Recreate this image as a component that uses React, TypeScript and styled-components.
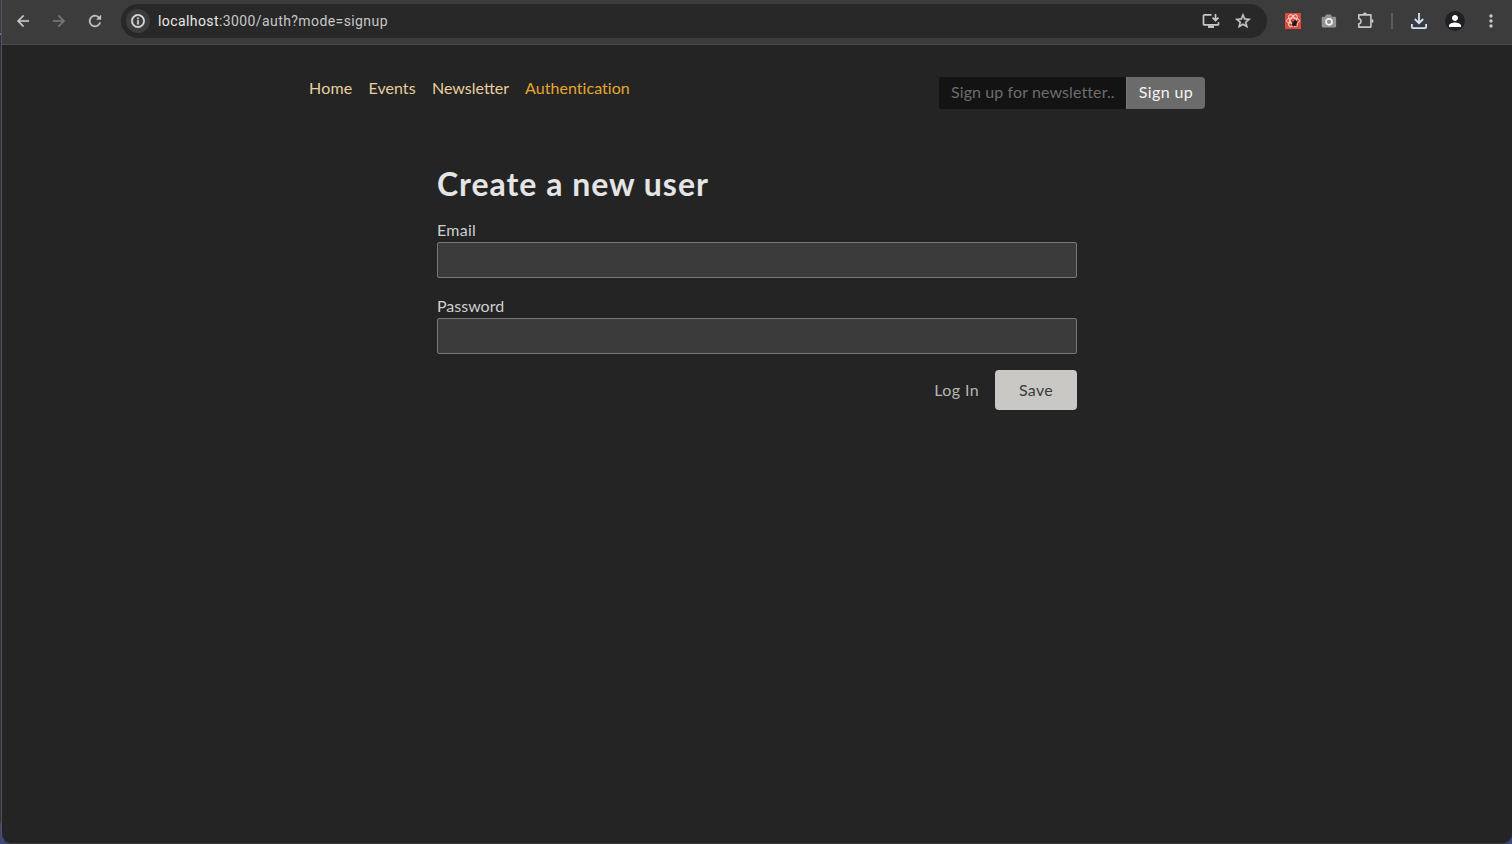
import React from 'react';
import styled, { createGlobalStyle } from 'styled-components';

const GlobalStyle = createGlobalStyle`
  * { box-sizing: border-box; }
  body { margin: 0; background: #30323c; font-family: Lato, sans-serif; }
`;

const Desktop = styled.div`
  height: 844px;
  padding-left: 1px;
  overflow: hidden;
  background: linear-gradient(#3b3d40 0 33px, #4a78c8 33px 35px, #303237 35px 805px, #303237 820px, #3d477c 825px);
`;

const BrowserWindow = styled.div`
  height: 844px;
  border-left: 1px solid #505255;
  border-bottom: 1px solid #38383a;
  border-radius: 0 0 10px 10px;
  overflow: hidden;
  background: #242424;
`;

const Toolbar = styled.div`
  display: flex;
  align-items: center;
  height: 45px;
  padding: 0 3px 3px;
  background: #3c3c3c;
  border-bottom: 1px solid #4a4a4a;
`;

const ToolButton = styled.div<{ $color?: string }>`
  display: flex;
  flex: none;
  align-items: center;
  justify-content: center;
  width: 36px;
  height: 34px;
  color: ${(p) => p.$color ?? '#c7c7c7'};
`;

const AddressBar = styled.div`
  display: flex;
  flex: 1;
  align-items: center;
  height: 34px;
  margin: 0 8px;
  padding: 0 8px 0 5px;
  border-radius: 17px;
  background: #282828;
`;

const SiteInfo = styled.div`
  display: flex;
  align-items: center;
  justify-content: center;
  width: 24px;
  height: 24px;
  margin-right: 8px;
  border-radius: 50%;
  background: #3c3c3c;
  color: #e3e3e3;
`;

const Url = styled.div`
  flex: 1;
  font: 14px/20px Roboto, sans-serif;
  letter-spacing: 0.41px;
  color: #c7c7c7;
`;

const Host = styled.span`
  color: #e8e8e8;
`;

const BarAction = styled.div`
  display: flex;
  justify-content: center;
  width: 32px;
  color: #c7c7c7;
`;

const Separator = styled.div`
  width: 2px;
  height: 16px;
  margin: 0 8px;
  background: #5c5c5c;
`;

const Avatar = styled.div`
  display: flex;
  align-items: center;
  justify-content: center;
  width: 20px;
  height: 20px;
  border-radius: 50%;
  background: #202124;
  color: #fff;
`;

const Header = styled.header`
  display: flex;
  justify-content: space-between;
  width: 896px;
  margin: 32px auto 0;
`;

const Nav = styled.nav`
  display: flex;
  height: 24px;
`;

const NavLink = styled.a<{ $width: number; $spacing: number; $active?: boolean }>`
  width: ${(p) => p.$width}px;
  margin-right: 16px;
  font-size: 16px;
  line-height: 22px;
  letter-spacing: ${(p) => p.$spacing}px;
  white-space: nowrap;
  color: ${(p) => (p.$active ? '#e6a72f' : '#e7cf9f')};
`;

const Newsletter = styled.form`
  display: flex;
  height: 32px;
`;

const NewsletterInput = styled.input`
  width: 187px;
  padding: 0 0 2px 12px;
  border: 0;
  border-radius: 2px 0 0 2px;
  background: #131313;
  font: 16px/30px Lato, sans-serif;
  letter-spacing: 0.1px;

  &::placeholder { color: #6d6d6d; opacity: 1; }
`;

const NewsletterButton = styled.button`
  width: 79px;
  padding: 0 0 2px;
  border: 0;
  border-left: 1px solid #777;
  border-radius: 0 4px 4px 0;
  background: #6b6b6b;
  color: #f4f4f4;
  font: 16px/30px Lato, sans-serif;
  letter-spacing: 0.4px;
`;

const UserForm = styled.form`
  width: 640px;
  margin: 53px auto 0;
`;

const Title = styled.h1`
  margin: 0 0 12px;
  font-size: 32px;
  line-height: 44px;
  font-weight: 700;
  letter-spacing: 0.98px;
  white-space: nowrap;
  color: #e5e5e5;
`;

const Field = styled.div`
  margin-bottom: 16px;
`;

const Label = styled.label<{ $spacing: number }>`
  display: block;
  height: 24px;
  font-size: 16px;
  line-height: 24px;
  letter-spacing: ${(p) => p.$spacing}px;
  color: #cfcfcf;
`;

const Input = styled.input`
  display: block;
  width: 100%;
  height: 36px;
  border: 1px solid #787878;
  border-radius: 2px;
  background: #3b3b3b;
`;

const Actions = styled.div`
  display: flex;
  align-items: center;
  justify-content: flex-end;
  gap: 16px;
`;

const LoginLink = styled.a`
  font-size: 16px;
  line-height: 24px;
  letter-spacing: 0.4px;
  color: #b5b5b3;
`;

const SaveButton = styled.button`
  width: 82px;
  height: 40px;
  padding: 0;
  border: 0;
  border-radius: 4px;
  background: #c9c8c5;
  color: #3a3a3a;
  font: 16px/24px Lato, sans-serif;
  letter-spacing: 0.3px;
`;

const Glyph = ({ d, size = 18, weight = 0 }: { d: string; size?: number; weight?: number }) => (
  <svg width={size} height={size} viewBox="0 0 24 24" fill="currentColor" stroke="currentColor" strokeWidth={weight}><path d={d} /></svg>
);

const InstallIcon = () => (
  <svg width="18" height="18" viewBox="0 0 18 18" fill="none" stroke="currentColor" strokeWidth="1.7">
    <path d="M9.5 2.8H2.4a.9.9 0 0 0-.9.9v8.2a.9.9 0 0 0 .9.9h13.2a.9.9 0 0 0 .9-.9v-1.7M13.5 2v6.2M10.5 5.6l3 3 3-3" />
    <path d="M6 14.7h6" strokeWidth="2.4" />
  </svg>
);

const ReactBugIcon = () => (
  <svg width="16" height="16" viewBox="0 0 16 16">
    <rect width="16" height="16" rx="0.6" fill="#dc4b3c" />
    <g fill="none" stroke="#f7d4cf" strokeWidth="1">
      <ellipse cx="8" cy="7.7" rx="6.6" ry="2.8" />
      <ellipse cx="8" cy="7.7" rx="6.6" ry="2.8" transform="rotate(60 8 7.7)" />
      <ellipse cx="8" cy="7.7" rx="6.6" ry="2.8" transform="rotate(120 8 7.7)" />
    </g>
    <ellipse cx="9.6" cy="10.2" rx="2" ry="3.2" transform="rotate(38 9.6 10.2)" fill="#1e1716" />
    <path d="M6.3 7.6l5.3 5.4M12.5 8l-5.7 4.4M10.3 6.5l.4 6.8" stroke="#1e1716" strokeWidth=".7" />
  </svg>
);

const CameraIcon = () => (
  <svg width="16" height="16" viewBox="0 0 16 16">
    <path d="M2 3.8h2l1.2-2.4h4.6L11 3.8h2.8a1.3 1.3 0 0 1 1.3 1.3v8.2a1.3 1.3 0 0 1-1.3 1.3H2a1.3 1.3 0 0 1-1.3-1.3V5.1A1.3 1.3 0 0 1 2 3.8z" fill="#949494" />
    <circle cx="8" cy="8.8" r="3" fill="#8b8b8b" stroke="#f3f3f3" strokeWidth="1.7" />
  </svg>
);

const PuzzleIcon = () => (
  <svg width="18" height="18" viewBox="0 0 18 18">
    <path d="M2.8 2.9h12.1v12.2H2.8v-3.4c1.4-.2 2.2-1.1 2.2-2.5s-.8-2.3-2.2-2.5z" fill="none" stroke="#c7c7c7" strokeWidth="1.6" strokeLinejoin="round" />
    <path d="M6.8 2.5a2.1 2.1 0 0 1 4.2 0zM15.5 6.9a2.1 2.1 0 0 1 0 4.2z" fill="#c7c7c7" />
  </svg>
);

const ARROW_BACK = 'M20 11H7.83l5.59-5.59L12 4l-8 8 8 8 1.41-1.41L7.83 13H20v-2z';
const ARROW_FORWARD = 'M12 4l-1.41 1.41L16.17 11H4v2h12.17l-5.58 5.59L12 20l8-8z';
const REFRESH = 'M17.65 6.35A7.96 7.96 0 0 0 12 4c-4.42 0-8 3.58-8 8s3.58 8 8 8c3.73 0 6.84-2.55 7.73-6h-2.08A6 6 0 1 1 12 6c1.66 0 3.14.69 4.22 1.78L14 10h6V4z';
const INFO = 'M11 7h2v2h-2zm0 4h2v6h-2zm1-9C6.48 2 2 6.48 2 12s4.48 10 10 10 10-4.48 10-10S17.52 2 12 2zm0 18c-4.41 0-8-3.59-8-8s3.59-8 8-8 8 3.59 8 8-3.59 8-8 8z';
const STAR = 'M22 9.24l-7.19-.62L12 2 9.19 8.63 2 9.24l5.46 4.73L5.82 21 12 17.27 18.18 21l-1.63-7.03L22 9.24zM12 15.4l-3.76 2.27 1-4.28-3.32-2.88 4.38-.38L12 6.1l1.71 4.04 4.38.38-3.32 2.88 1 4.28L12 15.4z';
const PERSON = 'M12 12c2.21 0 4-1.79 4-4s-1.79-4-4-4-4 1.79-4 4 1.79 4 4 4zm0 2c-2.67 0-8 1.34-8 4v2h16v-2c0-2.66-5.33-4-8-4z';
const MORE = 'M12 8c1.1 0 2-.9 2-2s-.9-2-2-2-2 .9-2 2 .9 2 2 2zm0 2c-1.1 0-2 .9-2 2s.9 2 2 2 2-.9 2-2-.9-2-2-2zm0 6c-1.1 0-2 .9-2 2s.9 2 2 2 2-.9 2-2-.9-2-2-2z';

export default function App() {
  return (
    <Desktop>
      <GlobalStyle />
      <BrowserWindow>
        <Toolbar>
          <ToolButton><Glyph d={ARROW_BACK} weight={0.4} /></ToolButton>
          <ToolButton $color="#777"><Glyph d={ARROW_FORWARD} weight={0.4} /></ToolButton>
          <ToolButton><Glyph d={REFRESH} weight={0.4} /></ToolButton>
          <AddressBar>
            <SiteInfo><Glyph d={INFO} size={16} weight={0.6} /></SiteInfo>
            <Url><Host>localhost</Host>:3000/auth?mode=signup</Url>
            <BarAction><InstallIcon /></BarAction>
            <BarAction><Glyph d={STAR} weight={0.7} /></BarAction>
          </AddressBar>
          <ToolButton><ReactBugIcon /></ToolButton>
          <ToolButton><CameraIcon /></ToolButton>
          <ToolButton><PuzzleIcon /></ToolButton>
          <Separator />
          <ToolButton $color="#d3e3fd">
            <svg width="18" height="18" viewBox="0 0 18 18" fill="none" stroke="currentColor" strokeWidth="1.8">
              <path d="M9 1v10M4.8 7l4.2 4.2L13.2 7M1.9 12v3.1a1 1 0 0 0 1 1h12.2a1 1 0 0 0 1-1V12" />
            </svg>
          </ToolButton>
          <ToolButton><Avatar><Glyph d={PERSON} /></Avatar></ToolButton>
          <ToolButton><Glyph d={MORE} size={20} /></ToolButton>
        </Toolbar>
        <Header>
          <Nav>
            <NavLink $width={43.5} $spacing={0.2}>Home</NavLink>
            <NavLink $width={47.5} $spacing={0.05}>Events</NavLink>
            <NavLink $width={77} $spacing={0}>Newsletter</NavLink>
            <NavLink $width={89} $spacing={0.05} $active>Authentication</NavLink>
          </Nav>
          <Newsletter>
            <NewsletterInput placeholder="Sign up for newsletter.." />
            <NewsletterButton type="button">Sign up</NewsletterButton>
          </Newsletter>
        </Header>
        <UserForm>
          <Title>Create a new user</Title>
          <Field>
            <Label $spacing={0.25}>Email</Label>
            <Input />
          </Field>
          <Field>
            <Label $spacing={0}>Password</Label>
            <Input />
          </Field>
          <Actions>
            <LoginLink>Log In</LoginLink>
            <SaveButton type="button">Save</SaveButton>
          </Actions>
        </UserForm>
      </BrowserWindow>
    </Desktop>
  );
}
